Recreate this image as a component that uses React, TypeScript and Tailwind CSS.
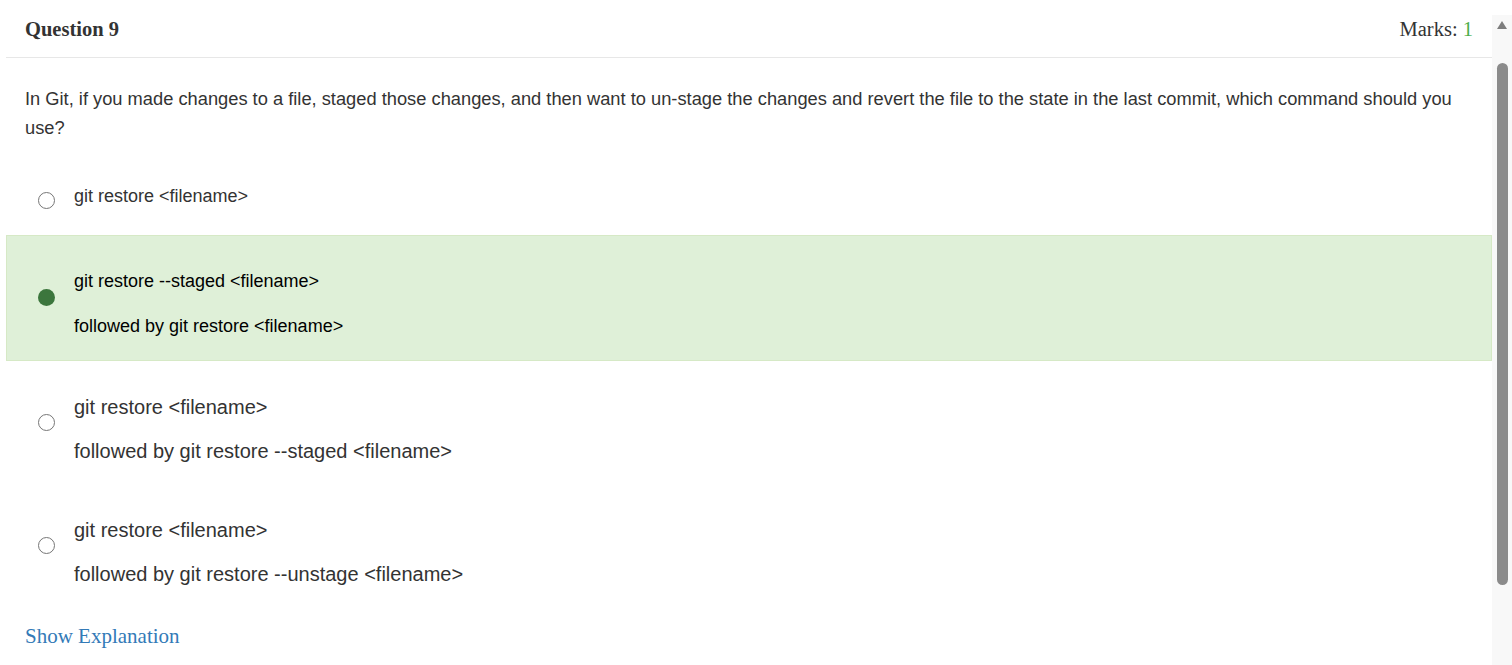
import React from 'react';

const sans = "font-['Liberation_Sans',Arial,sans-serif]";
const serif = "font-['Liberation_Serif','Times_New_Roman',serif]";

const Radio = ({ checked }: { checked?: boolean }) =>
  checked ? (
    <span className="block w-[17px] h-[17px] rounded-full bg-[#3c763d]" />
  ) : (
    <span className="block w-[17px] h-[17px] rounded-full border-[1.5px] border-[#767676] bg-white" />
  );

export default function App() {
  return (
    <div className={`flex h-[665px] w-full overflow-hidden bg-white ${sans}`}>
      <div className="flex-1 ml-[6px] flex flex-col">
        {/* header */}
        <div className="h-[58px] shrink-0 border-b border-[#e7e7e7] px-[19px] pt-[2px] flex items-center justify-between">
          <span className={`${serif} text-[20.5px] font-bold text-[#333]`}>Question 9</span>
          <span className={`${serif} text-[20.5px] text-[#333]`}>
            Marks: <span className="text-[#4cae4c]">1</span>
          </span>
        </div>

        <p className="px-[19px] pt-[26px] text-[18.3px] leading-[29px] text-[#333]">
          In Git, if you made changes to a file, staged those changes, and then want to un-stage the changes and revert the file to the state in the last commit, which command should you use?
        </p>

        {/* option 1 */}
        <div className="mt-[41px] pl-[32px] flex items-start gap-[19px]">
          <div className="mt-[9px]"><Radio /></div>
          <div className="text-[18px] leading-[26px] text-[#333]">git restore &lt;filename&gt;</div>
        </div>

        {/* option 2 (selected) */}
        <div className="mt-[26px] border border-[#d6e9c6] bg-[#dff0d8] pl-[31px] pt-[32px] pb-[21px] flex items-start gap-[19px]">
          <div className="mt-[21px]"><Radio checked /></div>
          <div className="flex flex-col gap-[19px] text-[18px] leading-[26px] text-black">
            <span>git restore --staged &lt;filename&gt;</span>
            <span>followed by git restore &lt;filename&gt;</span>
          </div>
        </div>

        {/* option 3 */}
        <div className="mt-[32px] pl-[32px] flex items-start gap-[19px]">
          <div className="mt-[21px]"><Radio /></div>
          <div className="flex flex-col gap-[16px] text-[20px] leading-[28px] text-[#333]">
            <span>git restore &lt;filename&gt;</span>
            <span>followed by git restore --staged &lt;filename&gt;</span>
          </div>
        </div>

        {/* option 4 */}
        <div className="mt-[51px] pl-[32px] flex items-start gap-[19px]">
          <div className="mt-[21px]"><Radio /></div>
          <div className="flex flex-col gap-[16px] text-[20px] leading-[28px] text-[#333]">
            <span>git restore &lt;filename&gt;</span>
            <span>followed by git restore --unstage &lt;filename&gt;</span>
          </div>
        </div>

        <div className={`mt-[36px] px-[19px] ${serif} text-[21px] leading-[24px] text-[#337ab7]`}>
          Show Explanation
        </div>
      </div>

      {/* scrollbar */}
      <div className="w-[20px] shrink-0 flex flex-col">
        <div className="h-[15px] bg-white" />
        <div className="flex-1 bg-[#f8f8f8] flex flex-col items-center">
          <svg width="10" height="8" viewBox="0 0 10 8" className="mt-[6px]">
            <path d="M5 0 L10 8 L0 8 Z" fill="#7d7d7d" />
          </svg>
          <div className="mt-[34px] ml-[1px] w-[11px] h-[522px] rounded-full bg-[#8b8b8b]" />
        </div>
      </div>
    </div>
  );
}
